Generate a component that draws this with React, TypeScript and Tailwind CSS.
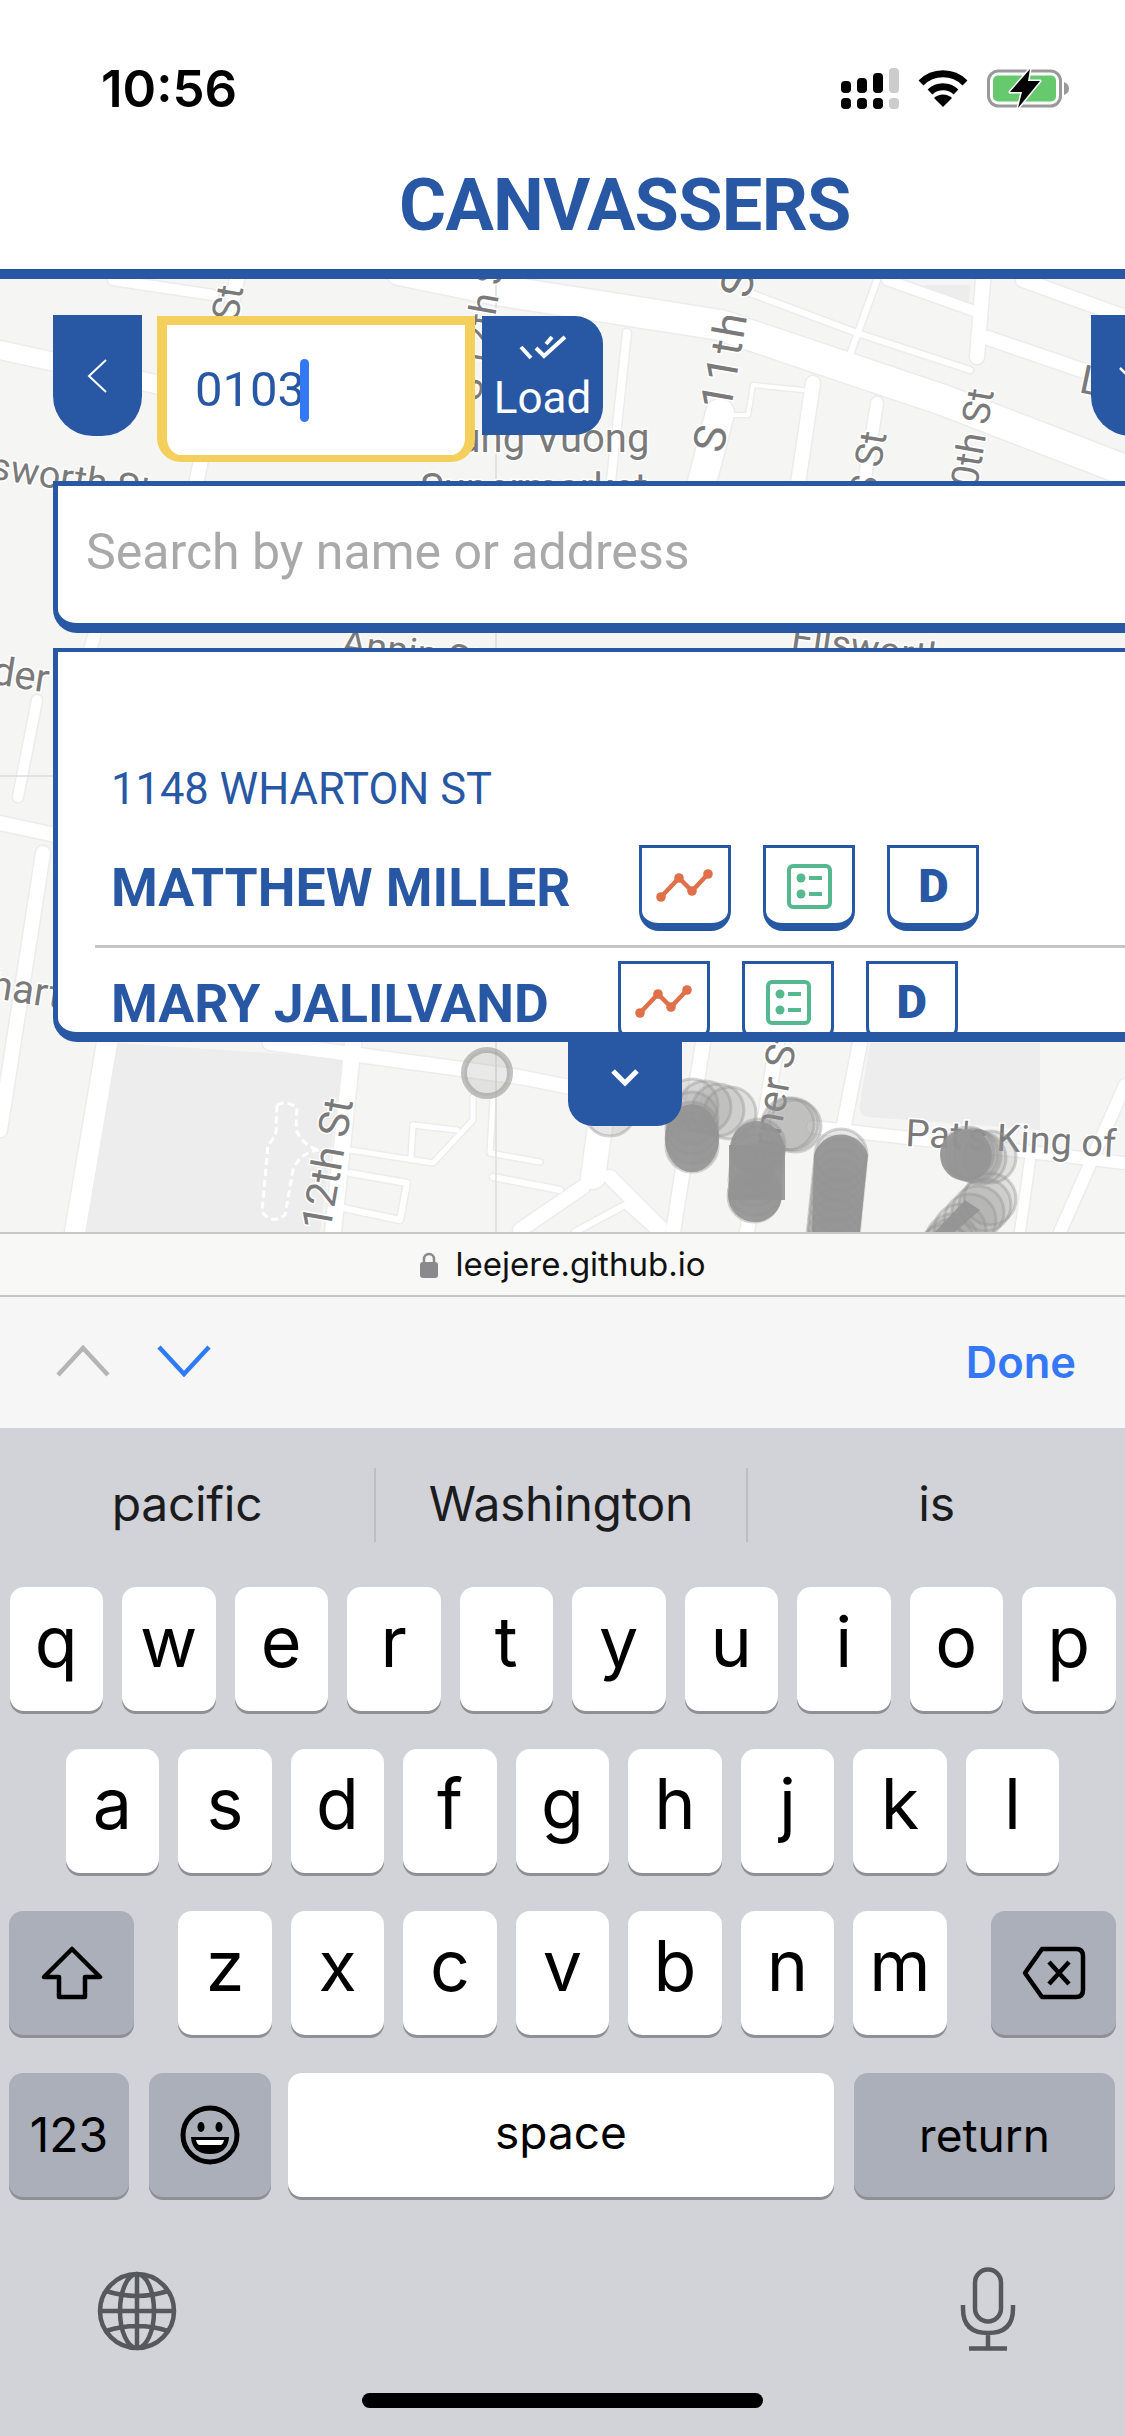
import React from "react";

// Streets of the map, in page coordinates
const bigStreets: [string, number][] = [
  ["M400 270 L497 290 L720 325 L943 400 L1125 470", 30],
  ["M720 413 L700 490", 28],
  ["M107 1043 L75 1232", 20],
  ["M600 1127 L593 1177", 24],
];

const streets: [string, number][] = [
  ["M113 280 L213 295", 10],
  ["M237 279 L195 490", 14],
  ["M0 350 L160 385 L300 415", 18],
  ["M37 700 L18 797", 10],
  ["M0 823 L60 836", 14],
  ["M95 633 L90 650", 12],
  ["M43 853 L0 1130", 14],
  ["M627 333 L610 490", 8],
  ["M813 383 L797 490", 14],
  ["M877 403 L863 490", 12],
  ["M750 293 L857 333 L970 370", 6],
  ["M887 280 L980 313", 10],
  ["M1023 280 L1125 317", 14],
  ["M988 338 L1125 385", 14],
  ["M877 280 L847 363", 6],
  ["M983 280 L977 357", 14],
  ["M753 385 L803 390", 4],
  ["M753 385 L748 415 L727 415", 4],
  ["M353 1043 L333 1232", 16],
  ["M270 1043 L520 1077 L570 1087 L680 1105", 14],
  ["M703 1043 L673 1232", 14],
  ["M860 1043 L843 1130", 14],
  ["M813 1127 L1125 1163", 12],
  ["M777 1043 L747 1232", 14],
  ["M583 1187 L520 1230", 14],
  ["M610 1177 L660 1227", 14],
  ["M575 1232 L625 1205 L655 1232", 6],
  ["M1125 1085 L1060 1232", 12],
  ["M1030 1160 L1020 1232", 10],
  ["M473 1097 L473 1120 L433 1163 L350 1150", 5],
  ["M413 1125 L411 1157", 5],
  ["M413 1125 L457 1130", 5],
  ["M350 1173 L407 1183 L400 1220 L343 1208", 6],
  ["M493 1100 L490 1153 L540 1162", 5],
  ["M493 1177 L560 1190", 6],
];

// Overlapping markers: [x, y]
const markers: [number, number][] = [
  [610, 1110],
  [692, 1105], [705, 1107], [718, 1110], [730, 1113], [692, 1118], [692, 1128], [692, 1138], [692, 1146],
  [788, 1124], [792, 1124], [795, 1126],
  [759, 1145], [758, 1152], [757, 1160], [756, 1170], [755, 1180], [755, 1190], [754, 1196],
  [841, 1155], [840, 1165], [839, 1175], [838, 1185], [837, 1195], [836, 1205], [835, 1215], [834, 1225], [833, 1235], [832, 1245],
  [968, 1153], [972, 1155], [975, 1156], [980, 1158], [990, 1157],
  [990, 1199], [985, 1205], [978, 1212], [970, 1220], [960, 1230], [952, 1240], [945, 1250], [950, 1245],
];

const labels: { t: string; x: number; y: number; r: number; s?: number; ls?: number }[] = [
  { t: "S 13th St", x: 217, y: 438, r: -80, s: 38 },
  { t: "S 12th St", x: 480, y: 402, r: -80, s: 38 },
  { t: "S 11th St", x: 723, y: 454, r: -80, s: 44, ls: 3 },
  { t: "S St", x: 875, y: 500, r: -80, s: 38 },
  { t: "10th St", x: 973, y: 510, r: -80, s: 38 },
  { t: "Ellsworth St", x: -50, y: 472, r: 9, s: 38 },
  { t: "Hung Vuong", x: 430, y: 452, r: 0, s: 40 },
  { t: "Supermarket", x: 420, y: 502, r: 0, s: 40 },
  { t: "Annin St", x: 340, y: 655, r: 8, s: 38 },
  { t: "Ellsworth", x: 790, y: 650, r: 8, s: 38 },
  { t: "Alder St", x: -45, y: 678, r: 9, s: 40 },
  { t: "Wharton", x: -46, y: 992, r: 9, s: 40 },
  { t: "L", x: 1078, y: 392, r: 12, s: 40 },
  { t: "12th St", x: 330, y: 1232, r: -80, s: 42 },
  { t: "Warner St", x: 768, y: 1205, r: -80, s: 40 },
  { t: "Pat's King of", x: 905, y: 1146, r: 3, s: 38 },
];

function MapDrawing() {
  return (
    <svg className="absolute inset-0" width="1125" height="953" viewBox="0 279 1125 953">
      <rect x="0" y="279" width="1125" height="953" fill="#f5f5f3" />
      <path d="M117 1043 L343 1058 L320 1232 L87 1232 Z" fill="#ecedec" />
      <path d="M870 1043 L1040 1043 L1040 1130 L868 1117 Q858 1115 860 1105 Z" fill="#ecedec" />
      <path d="M925 285 L970 285 L968 310 L925 296 Z" fill="#ecedec" />
      {[...bigStreets, ...streets].map(([d, w], i) => (
        <path key={i} d={d} fill="none" stroke="#ebedec" strokeWidth={w + 3} strokeLinecap="round" strokeLinejoin="round" />
      ))}
      {[...bigStreets, ...streets].map(([d, w], i) => (
        <path key={i} d={d} fill="none" stroke="#ffffff" strokeWidth={w} strokeLinecap="round" strokeLinejoin="round" />
      ))}
      <path
        d="M277 1105 Q287 1100 297 1108 L296 1130 Q305 1148 320 1150 Q300 1152 293 1170 L285 1215 Q272 1225 262 1212 L268 1145 Q278 1135 276 1125 Z"
        fill="none"
        stroke="#ffffff"
        strokeWidth="3"
        strokeDasharray="7 4"
      />
      <path d="M496 279 L496 1232 M0 776 L60 776" stroke="#dcdcdc" strokeWidth="1.5" />
      {labels.map((l, i) => (
        <text
          key={i}
          x={l.x}
          y={l.y}
          transform={`rotate(${l.r} ${l.x} ${l.y})`}
          fontFamily="Roboto, sans-serif"
          fontSize={l.s}
          letterSpacing={l.ls}
          fill="#7a7a7a"
          stroke="#ffffff"
          strokeWidth="3"
          paintOrder="stroke"
        >
          {l.t}
        </text>
      ))}
      <circle cx="487" cy="1073" r="23" fill="#9a9a9a" fillOpacity="0.22" stroke="#9a9a9a" strokeOpacity="0.6" strokeWidth="6" />
      {markers.map(([x, y], i) => (
        <circle key={i} cx={x} cy={y} r="26" fill="#939393" fillOpacity="0.22" stroke="#939393" strokeOpacity="0.4" strokeWidth="3" />
      ))}
      <g fill="#939393" fillOpacity="0.9">
        <ellipse cx="692" cy="1138" rx="27" ry="34" />
        <rect x="729" y="1145" width="56" height="55" />
        <circle cx="757" cy="1148" r="27" />
        <circle cx="755" cy="1195" r="27" />
        <path d="M812 1232 L814 1155 A28 28 0 0 1 868 1155 L860 1232 Z" />
        <circle cx="966" cy="1155" r="26" />
        <path d="M935 1232 L965 1200 L980 1210 L955 1232 Z" />
      </g>
    </svg>
  );
}

function StatusIcons() {
  return (
    <div className="flex items-start gap-[19px]">
      <svg width="58" height="41" viewBox="0 0 58 41">
        {[
          [0, 13, 12],
          [16, 10, 15],
          [32, 5, 20],
        ].map(([x, y, h]) => (
          <g key={x} fill="#000">
            <rect x={x} y={y} width="10" height={h} rx="4" />
            <rect x={x} y="30" width="10" height="11" rx="4" />
          </g>
        ))}
        <rect x="48" y="0" width="10" height="25" rx="4" fill="#cccccc" />
        <rect x="48" y="30" width="10" height="11" rx="4" fill="#cccccc" />
      </svg>
      <svg className="mt-[2px]" width="50" height="37" viewBox="0 0 50 37">
        <path d="M3 13 A31 31 0 0 1 47 13" fill="none" stroke="#000" strokeWidth="7" />
        <path d="M12 22 A19 19 0 0 1 38 22" fill="none" stroke="#000" strokeWidth="7" />
        <path d="M25 37 L16 28 A13 13 0 0 1 34 28 Z" fill="#000" />
      </svg>
      <svg className="mt-[1px]" width="82" height="39" viewBox="0 0 82 39">
        <rect x="1.5" y="2" width="72" height="35" rx="10" fill="none" stroke="#999999" strokeWidth="3" />
        <rect x="6" y="6.5" width="63" height="26" rx="5" fill="#67c96e" />
        <path d="M77 13 Q82 15 82 19.5 Q82 24 77 26 Z" fill="#999999" />
        <path d="M43 0 L23 23 L35 23 L31 39 L53 12 L41 12 Z" fill="#000" stroke="#fff" strokeWidth="3" paintOrder="stroke" strokeLinejoin="round" />
      </svg>
    </div>
  );
}

function ChartIcon() {
  return (
    <svg width="86" height="75" viewBox="0 0 86 75" className="text-[#e0704a]">
      <path d="M19 49 L37 30 L50 43 L66 26" fill="none" stroke="currentColor" strokeWidth="4.5" />
      {[[19, 49], [37, 30], [50, 43], [66, 26]].map(([x, y]) => (
        <circle key={x} cx={x} cy={y} r="4.8" fill="currentColor" />
      ))}
    </svg>
  );
}

function ListIcon() {
  return (
    <svg width="86" height="75" viewBox="0 0 86 75" className="text-[#56b88f]">
      <rect x="23" y="18" width="41" height="41" rx="4" fill="none" stroke="currentColor" strokeWidth="4" />
      <circle cx="35" cy="30" r="4.5" fill="currentColor" />
      <circle cx="35" cy="46" r="4.5" fill="currentColor" />
      <path d="M43 30 H56 M43 46 H56" stroke="currentColor" strokeWidth="4" />
    </svg>
  );
}

function ActionButton({ children }: { children: React.ReactNode }) {
  return (
    <div className="flex h-[86px] w-[92px] shrink-0 items-center justify-center rounded-b-[20px] border-x-[3px] border-t-[3px] border-b-[8px] border-[#2858a4] bg-white">
      {children}
    </div>
  );
}

function PersonRow({ name }: { name: string }) {
  return (
    <div className="flex items-center">
      <span className="text-[53.5px] leading-none font-bold text-[#2858a4]">{name}</span>
      <div className="ml-[69px] flex gap-[32px]">
        <ActionButton>
          <ChartIcon />
        </ActionButton>
        <ActionButton>
          <ListIcon />
        </ActionButton>
        <ActionButton>
          <span className="text-[47px] leading-none font-black text-[#2858a4]">D</span>
        </ActionButton>
      </div>
    </div>
  );
}

function Chevron({ d, w, h, color, sw }: { d: string; w: number; h: number; color: string; sw: number }) {
  return (
    <svg width={w} height={h} viewBox={`0 0 ${w} ${h}`}>
      <path d={d} fill="none" stroke={color} strokeWidth={sw} />
    </svg>
  );
}

// className carries width, background and text size of the key
function Key({ label, className = "w-[93.5px] bg-white text-[70px]" }: { label: React.ReactNode; className?: string }) {
  return (
    <div
      className={`flex h-[124px] shrink-0 items-center justify-center rounded-[14px] leading-none text-black shadow-[0_3px_0_#8e9096] ${className}`}
    >
      {label}
    </div>
  );
}

function KeyRow({ keys }: { keys: string }) {
  return (
    <div className="flex justify-center gap-[19px]">
      {keys.split("").map((k) => (
        <Key key={k} label={<span className="-mt-[14px]">{k}</span>} />
      ))}
    </div>
  );
}

function Keyboard() {
  return (
    <div className="h-[1008px] bg-[#d1d3d9] font-[Inter,sans-serif]">
      <div className="flex h-[159px] items-start pt-[40px] text-[48px] tracking-[-0.3px] text-[#1c1c1e]">
        <div className="flex h-[74px] w-[374px] items-center justify-center pb-[2px]">pacific</div>
        <div className="flex h-[74px] w-[374px] items-center justify-center border-x-2 border-[#bcbec4] pb-[2px]">Washington</div>
        <div className="flex h-[74px] flex-1 items-center justify-center pb-[2px]">is</div>
      </div>
      <div className="flex flex-col gap-[38px]">
        <KeyRow keys="qwertyuiop" />
        <KeyRow keys="asdfghjkl" />
        <div className="flex justify-between px-[9px]">
          <Key
            className="w-[125px] bg-[#abafba]"
            label={
              <svg width="62" height="54" viewBox="0 0 62 54">
                <path d="M31 3 L59 31 H44 V51 H18 V31 H3 Z" fill="none" stroke="#000" strokeWidth="4.5" strokeLinejoin="round" />
              </svg>
            }
          />
          <div className="flex gap-[19px]">
            {"zxcvbnm".split("").map((k) => (
              <Key key={k} label={<span className="-mt-[14px]">{k}</span>} />
            ))}
          </div>
          <Key
            className="w-[125px] bg-[#abafba]"
            label={
              <svg width="64" height="54" viewBox="0 0 64 54">
                <path d="M20 3 H54 Q61 3 61 10 V44 Q61 51 54 51 H20 L3 27 Z" fill="none" stroke="#000" strokeWidth="4.5" strokeLinejoin="round" />
                <path d="M27 16 L47 38 M47 16 L27 38" stroke="#000" strokeWidth="4.5" />
              </svg>
            }
          />
        </div>
        <div className="flex px-[9px]">
          <Key className="w-[120px] bg-[#abafba] text-[48px]" label="123" />
          <Key
            className="ml-[20px] w-[122px] bg-[#abafba]"
            label={
              <svg width="60" height="60" viewBox="0 0 60 60">
                <circle cx="30" cy="30" r="27" fill="none" stroke="#000" strokeWidth="5" />
                <ellipse cx="21" cy="22" rx="3.5" ry="5" fill="#000" />
                <ellipse cx="39" cy="22" rx="3.5" ry="5" fill="#000" />
                <path d="M11 32 H49 Q48 49 30 49 Q12 49 11 32 Z" fill="#000" />
                <path d="M16 35 H44 Q43 40 40 40 H20 Q17 40 16 35 Z" fill="#fff" />
              </svg>
            }
          />
          <Key className="ml-[17px] w-[546px] bg-white text-[46px]" label={<span className="-mt-[6px]">space</span>} />
          <Key className="ml-[20px] w-[261px] bg-[#abafba] text-[46px]" label="return" />
        </div>
      </div>
      <div className="mt-[70px] flex items-end justify-between pr-[109px] pl-[97px]">
        <svg width="80" height="80" viewBox="0 0 80 80" fill="none" stroke="#55585c" strokeWidth="4.5">
          <circle cx="40" cy="40" r="37" />
          <ellipse cx="40" cy="40" rx="17" ry="37" />
          <path d="M40 3 V77 M3 40 H77 M9 20 Q40 30 71 20 M9 60 Q40 50 71 60" />
        </svg>
        <svg width="56" height="84" viewBox="0 0 56 84" fill="none" stroke="#55585c" strokeWidth="4.5">
          <rect x="15" y="2.5" width="26" height="52" rx="13" />
          <path d="M3 38 V42 Q3 66 28 66 Q53 66 53 42 V38 M28 66 V81 M9 81.5 H47" />
        </svg>
      </div>
      <div className="mx-auto mt-[42px] h-[15px] w-[401px] rounded-full bg-black" />
    </div>
  );
}

export default function App() {
  return (
    <div className="h-[2436px] w-[1125px] overflow-hidden bg-white font-[Roboto,sans-serif]">
      {/* Status bar + title */}
      <div className="h-[279px] border-b-[10px] border-[#2858a4]">
        <div className="flex items-start justify-between pt-[68px] pr-[56px] pl-[101px]">
          <span className="font-[Inter,sans-serif] text-[51px] leading-[42px] font-semibold text-black">10:56</span>
          <StatusIcons />
        </div>
        <h1 className="mt-[50px] pl-[399px] text-[72px] leading-[92px] font-bold tracking-[-0.7px] text-[#2858a4]">CANVASSERS</h1>
      </div>

      {/* Map with the controls on it */}
      <div className="relative h-[953px] overflow-hidden">
        <MapDrawing />
        <div className="relative w-[1400px] pt-[36px] pl-[53px]">
          <div className="flex h-[147px] items-start">
            <div className="flex h-[121px] w-[89px] items-center justify-center rounded-b-[40px] bg-[#2858a4]">
              <Chevron d="M19 1 L2 17 L19 33" w={21} h={34} color="#fff" sw={2} />
            </div>
            <div className="mt-px ml-[15px] flex h-[146px] w-[318px] items-center rounded-b-[24px] border-x-[10px] border-t-[9px] border-b-[7px] border-[#f5cf5b] bg-white pl-[28px] text-[49px] text-[#2858a4]">
              <span>0103</span>
              <span className="-ml-[5px] h-[63px] w-[9px] rounded-full bg-[#3478f6]" />
            </div>
            <div className="mt-px ml-[7px] flex h-[119px] w-[121px] flex-col items-center rounded-r-[28px] bg-[#2858a4] pt-[19px] text-[44px] leading-none text-white">
              <svg width="48" height="26" viewBox="0 0 48 26" fill="none" stroke="#fff" strokeWidth="4">
                <path d="M2 12 L12 23 M17 13 L25 21 L46 2 M27 9 L33 2" />
              </svg>
              <span className="mt-[15px]">Load</span>
            </div>
            <div className="ml-[488px] flex h-[121px] w-[89px] items-center justify-center rounded-bl-[40px] bg-[#2858a4]">
              <Chevron d="M2 2 L18 18 L34 2" w={36} h={20} color="#fff" sw={2.5} />
            </div>
          </div>

          <div className="mt-[19px] flex h-[152px] items-center rounded-bl-[24px] border-t-[5px] border-b-[10px] border-l-[5px] border-[#2858a4] bg-white pb-[4px] pl-[28px] text-[50px] text-[#a9a9a9]">
            Search by name or address
          </div>

          <div className="mt-[15px] h-[394px] overflow-hidden rounded-bl-[24px] border-t-[4px] border-b-[10px] border-l-[5px] border-[#2858a4] bg-white pt-[113px] pl-[53px]">
            <div className="h-[50px] text-[43.5px] leading-[50px] text-[#2858a4]">1148 WHARTON ST</div>
            <div className="mt-[30px]">
              <PersonRow name="MATTHEW MILLER" />
            </div>
            <div className="mt-[14px] -ml-[16px] h-[3px] bg-[#c4c4c4]" />
            <div className="mt-[13px]">
              <PersonRow name="MARY JALILVAND" />
            </div>
          </div>

          <div className="ml-[515px] flex h-[84px] w-[114px] items-start justify-center rounded-b-[25px] bg-[#2858a4] pt-[26px]">
            <Chevron d="M3 3 L15 15 L27 3" w={30} h={20} color="#fff" sw={5} />
          </div>
        </div>
      </div>

      {/* Safari address bar */}
      <div className="flex h-[65px] items-center justify-center gap-[18px] border-y-2 border-[#c6c6c6] bg-[#f8f8f7] font-[Inter,sans-serif] text-[33px] text-[#111]">
        <svg width="18" height="26" viewBox="0 0 18 26">
          <path d="M4 11 V7 A5 5 0 0 1 14 7 V11" fill="none" stroke="#8a8a8e" strokeWidth="2.5" />
          <rect x="0" y="10" width="18" height="16" rx="3" fill="#8a8a8e" />
        </svg>
        <span>leejere.github.io</span>
      </div>

      {/* Form accessory bar */}
      <div className="flex h-[131px] items-center justify-between bg-[#f6f6f6] pr-[49px] pl-[56px]">
        <div className="flex items-center gap-[47px] pb-[4px]">
          <Chevron d="M2 30 L27 3 L52 30" w={54} h={32} color="#b5b5b5" sw={4.5} />
          <Chevron d="M2 2 L27 29 L52 2" w={54} h={32} color="#2f7bf6" sw={4.5} />
        </div>
        <span className="font-[Inter,sans-serif] text-[43.5px] font-semibold text-[#3478f6]">Done</span>
      </div>

      <Keyboard />
    </div>
  );
}
